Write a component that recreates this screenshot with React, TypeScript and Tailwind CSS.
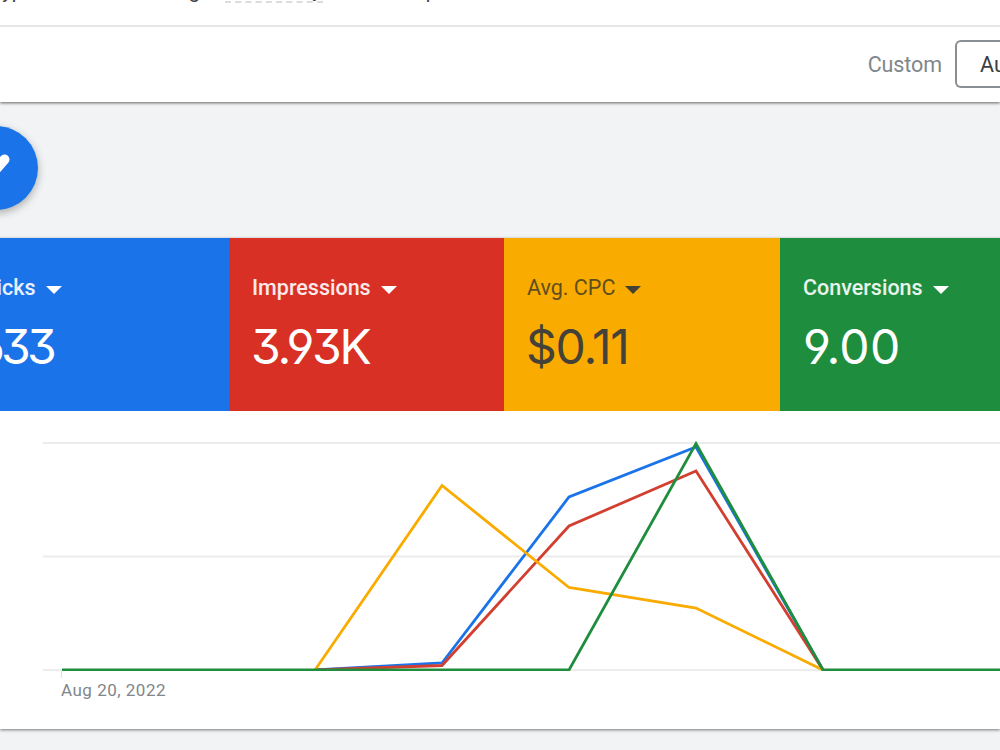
type Metric = {
  label: string;
  value: string;
  card: string;
  labelStyle: string;
  valueStyle: string;
};

const metrics: Metric[] = [
  {
    label: 'Clicks',
    value: '633',
    card: 'w-[275px] -ml-[46px] bg-[#1a73e8] text-white',
    labelStyle: 'font-medium text-white/90',
    valueStyle: 'tracking-[-3.8px]',
  },
  {
    label: 'Impressions',
    value: '3.93K',
    card: 'w-[275px] bg-[#d93025] text-white',
    labelStyle: 'font-medium text-white/90',
    valueStyle: 'tracking-[-2.3px] -ml-px',
  },
  {
    label: 'Avg. CPC',
    value: '$0.11',
    card: 'w-[276px] bg-[#f9ab00] text-[#444138]',
    labelStyle: 'text-[#5f4f20]',
    valueStyle: 'tracking-[-1.2px] -ml-px',
  },
  {
    label: 'Conversions',
    value: '9.00',
    card: 'w-[276px] bg-[#1e8e3e] text-white',
    labelStyle: 'font-medium text-white/90',
    valueStyle: 'tracking-[0.3px]',
  },
];

const series = [
  { color: '#1a73e8', points: '315,259 442,252 569,86 696,36 823,259' },
  { color: '#d23f31', points: '315,259 442,254.5 569,115 696,60 823,259' },
  { color: '#f9ab00', points: '315,259 442,74.5 569,176.5 696,197 823,259' },
  { color: '#1e8e3e', points: '62,259 569,259 696,32.5 823,259 1000,259' },
];

function MetricCard({ metric }: { metric: Metric }) {
  return (
    <div className={`h-[173px] shrink-0 pl-[23px] pt-[38px] ${metric.card}`}>
      <div className="flex h-6 items-center">
        <span className={`whitespace-nowrap text-[21.5px] leading-6 ${metric.labelStyle}`}>
          {metric.label}
        </span>
        <svg className="ml-[10px] mt-1 h-2 w-4 shrink-0" viewBox="0 0 16 8" fill="currentColor">
          <path d="M0 0h16L8 8z" />
        </svg>
      </div>
      <div
        className={`mt-[17px] font-['Inter',sans-serif] text-[48px] leading-[60px] [font-feature-settings:'ss01'] ${metric.valueStyle}`}
      >
        {metric.value}
      </div>
    </div>
  );
}

function TrendChart() {
  return (
    <svg className="block h-[260px] w-[1000px]" viewBox="0 0 1000 260" fill="none">
      <g stroke="#ececec" strokeWidth="2">
        <path d="M43 32h957M43 145.5h957M43 259h957" />
      </g>
      {series.map((line) => (
        <polyline key={line.color} points={line.points} stroke={line.color} strokeWidth="2.8" />
      ))}
    </svg>
  );
}

export default function App() {
  return (
    <div className="h-[750px] w-[1000px] overflow-hidden bg-[#f1f3f4] font-['Roboto',sans-serif]">
      <header className="relative h-[102px] bg-white shadow-[0_1px_3px_rgba(0,0,0,0.6)]">
        <div className="h-[27px] overflow-hidden border-b-2 border-[#e4e6e8]">
          <div className="-mt-[21px] flex h-6 text-[20px] leading-6 text-[#3c4043]">
            <span className="-ml-[9px] w-[163px] shrink-0">Type: Search</span>
            <span className="w-[71px] shrink-0">Budget:</span>
            <span className="h-6 w-[98px] shrink-0 border-b-2 border-dashed border-[#dcdcdc] text-[19px]">
              $50.00/day
            </span>
            <span className="ml-[89px] whitespace-nowrap">Optimization score</span>
          </div>
        </div>
        <div className="flex h-[75px] items-center justify-end">
          <span className="mr-[13px] mt-[2px] text-[21.5px] tracking-[-0.1px] text-[#80868b]">
            Custom
          </span>
          <div className="-mt-[2px] flex h-12 w-[45px] shrink-0 items-center overflow-hidden rounded-l-md border-2 border-r-0 border-[#8a8f93] pl-[23px] pt-[3px] text-[21.5px] text-[#3c4043]">
            Aug
          </div>
        </div>
      </header>

      <div className="h-[136px] pt-6">
        <div className="-ml-[46.5px] h-[84px] w-[84px] rounded-full bg-[#1a73e8] shadow-[0_3px_8px_rgba(0,0,0,0.3)]">
          <svg className="h-[84px] w-[84px]" viewBox="0 0 84 84" fill="none">
            <path d="M36 50L50.5 33.5" stroke="#fff" strokeWidth="10" strokeLinecap="round" />
          </svg>
        </div>
      </div>

      <main className="h-[491px] bg-white shadow-[0_1px_3px_rgba(0,0,0,0.5)]">
        <div className="flex">
          {metrics.map((metric) => (
            <MetricCard key={metric.label} metric={metric} />
          ))}
        </div>
        <TrendChart />
        <div className="ml-[61px] h-6 w-px">
          <div className="h-[7px] w-px bg-[#e0e0e0]" />
          <div className="whitespace-nowrap text-[17px] leading-6 tracking-[0.5px] text-[#80868b]">
            Aug 20, 2022
          </div>
        </div>
      </main>
    </div>
  );
}
